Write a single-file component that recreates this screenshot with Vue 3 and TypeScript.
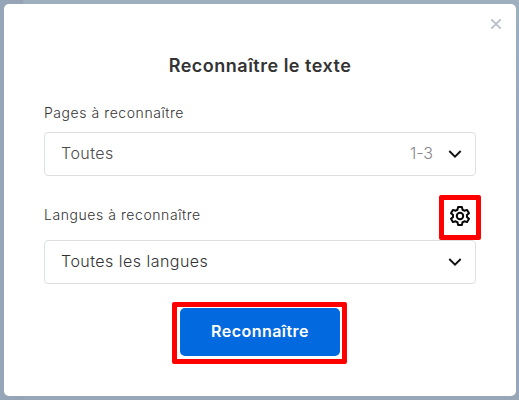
<script setup lang="ts">
import { ref } from 'vue'

const pages = ref({ label: 'Toutes', range: '1-3' })
const language = ref('Toutes les langues')
</script>

<template>
  <div class="backdrop">
    <section class="dialog" role="dialog" aria-labelledby="title">
      <button class="close" aria-label="Fermer">
        <svg width="12" height="12" viewBox="0 0 12 12"><path d="M1.3 1.3 10.7 10.7M10.7 1.3 1.3 10.7" /></svg>
      </button>
      <h1 id="title">Reconnaître le texte</h1>

      <div class="label-row"><span class="label">Pages à reconnaître</span></div>
      <div class="select">
        <span class="value muted">{{ pages.label }}</span>
        <span class="range">{{ pages.range }}</span>
        <svg class="chevron" width="14" height="10" viewBox="0 0 14 10"><path d="M1.3 2 7 7.6 12.7 2" /></svg>
      </div>

      <div class="label-row second">
        <span class="label">Langues à reconnaître</span>
        <button class="settings" aria-label="Paramètres">
          <svg width="22" height="22" viewBox="0 0 22 22">
            <path d="M9.1 1.9H12.9L13.5 4.7Q14.6 5.1 15.4 5.8L18.1 4.9 20 8.2 17.9 10.1Q18.1 11 17.9 11.9L20 13.8 18.1 17.1 15.4 16.2Q14.6 16.9 13.5 17.3L12.9 20.1H9.1L8.5 17.3Q7.4 16.9 6.6 16.2L3.9 17.1 2 13.8 4.1 11.9Q3.9 11 4.1 10.1L2 8.2 3.9 4.9 6.6 5.8Q7.4 5.1 8.5 4.7Z" />
            <circle cx="11" cy="11" r="3.2" />
          </svg>
        </button>
      </div>
      <div class="select">
        <span class="value">{{ language }}</span>
        <svg class="chevron" width="14" height="10" viewBox="0 0 14 10"><path d="M1.3 2 7 7.6 12.7 2" /></svg>
      </div>

      <button class="submit">Reconnaître</button>
    </section>
  </div>
</template>

<style>
body { margin: 0; }
</style>

<style scoped>
* { box-sizing: border-box; }
.backdrop {
  width: 519px;
  height: 400px;
  padding: 4px 3px 4px 4px;
  background: linear-gradient(90deg, #96a6b8 0, #94a4b5 23px, transparent 24px), linear-gradient(#9eafbe, #98a8ba 35%, #98a7b7);
  font-family: Inter, "Open Sans", sans-serif;
  font-weight: 300;
  color: #333;
}
.dialog {
  position: relative;
  height: 392px;
  padding: 48px 40px 0;
  border-radius: 5px;
  background: #fff;
  display: flex;
  flex-direction: column;
}
button { padding: 0; border: 0; background: none; font: inherit; }
svg { display: block; fill: none; }
.close { position: absolute; top: 14px; right: 14px; }
.close path { stroke: #b9bdc9; stroke-width: 1.8; }
h1 {
  margin: 0;
  height: 28px;
  font-size: 18px;
  line-height: 28px;
  font-weight: 600;
  letter-spacing: 0.5px;
  text-align: center;
  white-space: nowrap;
}
.label-row {
  height: 52px;
  padding-top: 19px;
  display: flex;
  justify-content: space-between;
  font-size: 14px;
  line-height: 28px;
}
.label { letter-spacing: 0.56px; }
.label-row.second { height: 64px; padding-top: 25px; }
.select {
  flex: none;
  width: 432px;
  height: 44px;
  padding: 0 13px 0 16px;
  border: 1px solid #dedfe2;
  border-radius: 4px;
  display: flex;
  align-items: center;
  font-size: 16px;
}
.value { flex: 1; padding-bottom: 2px; letter-spacing: 0.47px; }
.muted { color: #4c4c4e; }
.range { margin-right: 15px; padding-bottom: 2px; color: #85858a; }
.chevron { stroke: #111; stroke-width: 1.9; }
.settings {
  position: relative;
  width: 22px;
  height: 22px;
  margin: 4px 5px 0 0;
}
.settings::after {
  content: "";
  position: absolute;
  inset: -10px -10px -13px -10px;
  border: 5px solid #f00;
  border-radius: 2px;
}
.settings svg { stroke: #090909; stroke-width: 2; stroke-linejoin: round; }
.submit {
  position: relative;
  flex: none;
  align-self: center;
  width: 160px;
  height: 48px;
  margin-top: 24px;
  padding-bottom: 2px;
  border-radius: 5px;
  background: #0269df;
  color: #fff;
  font-size: 16px;
  font-weight: 600;
  letter-spacing: 0.45px;
}
.submit::after {
  content: "";
  position: absolute;
  inset: -6px -7px -8px -8px;
  border: 5px solid #f00;
  border-radius: 2px;
}
</style>
